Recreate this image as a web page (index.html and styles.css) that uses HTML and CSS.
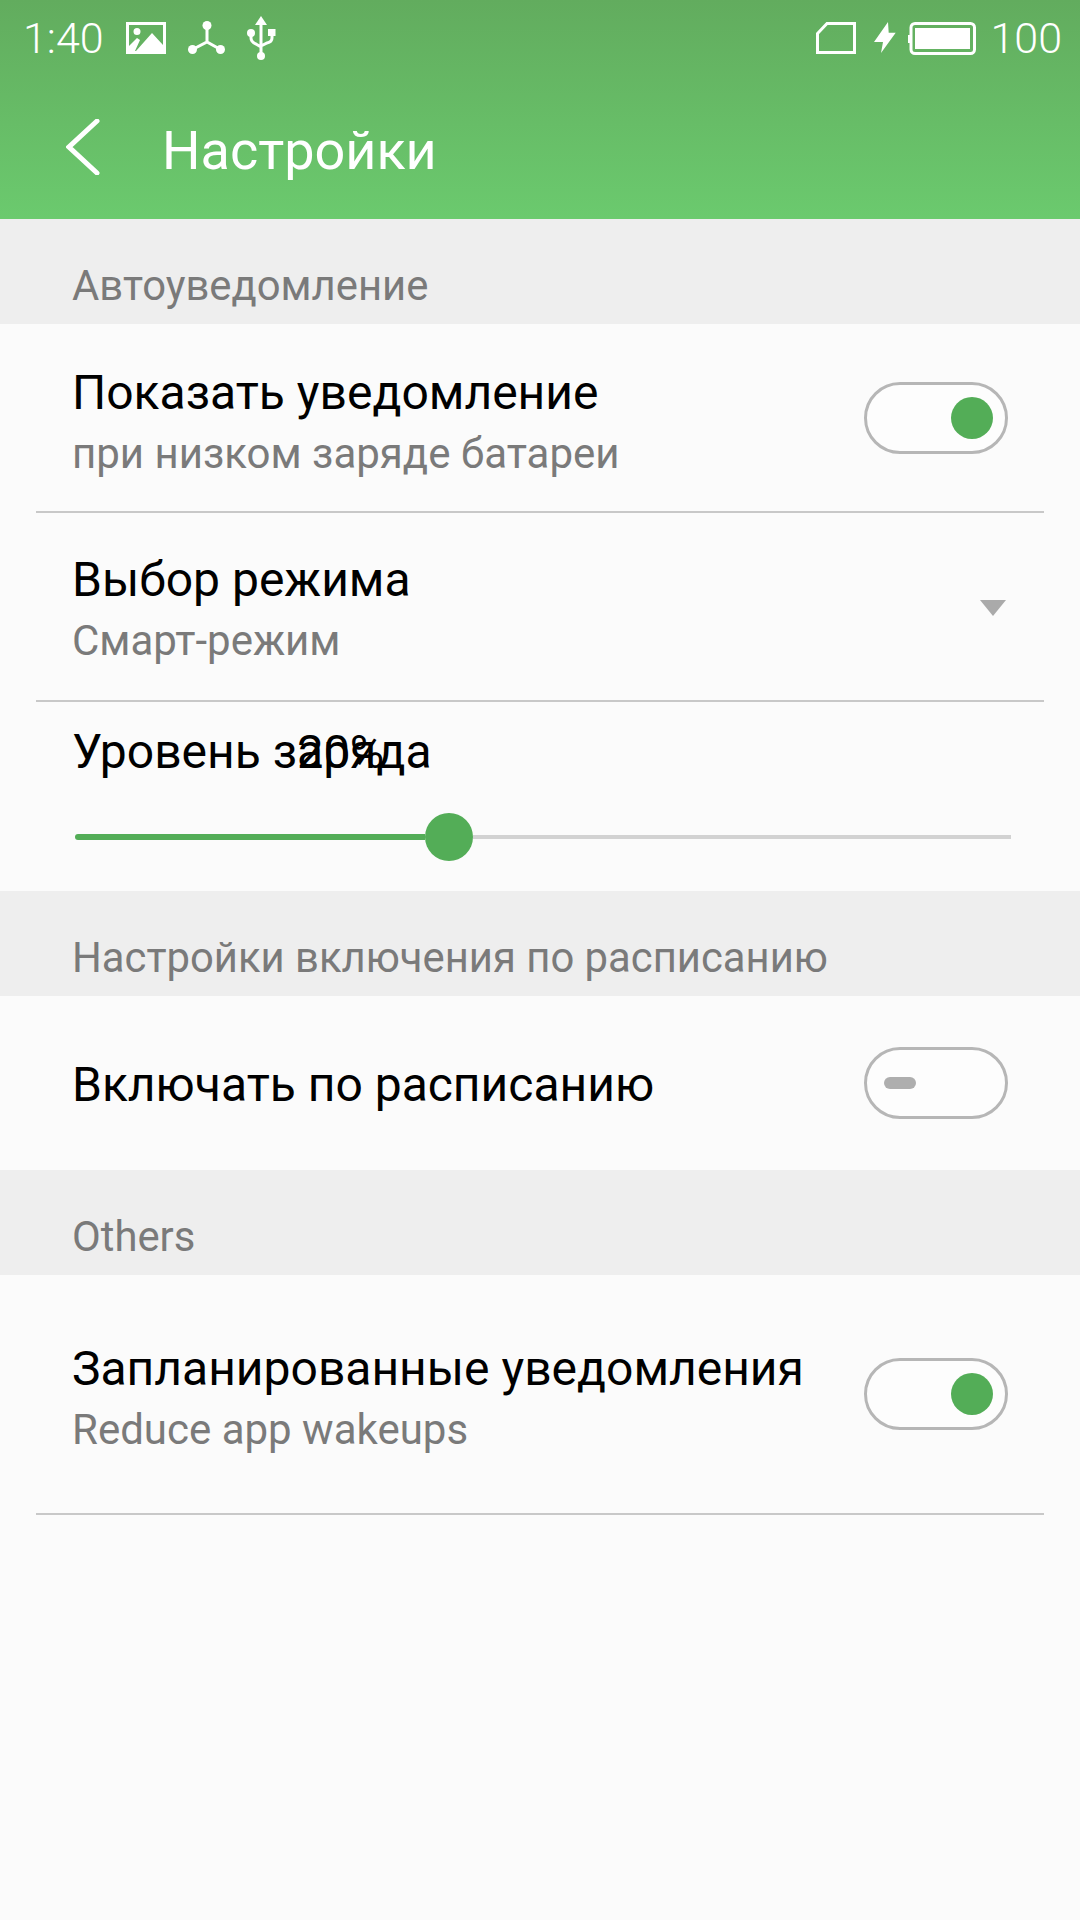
FILE: index.html
```html
<html>
<head>
<meta charset="utf-8" />
<link rel="stylesheet" href="styles.css">
</head>

<body>
    <div class="appbar">
        <div class="statusbar">
            <div class="status-group">
                <span class="status-text">1:40</span>
                <svg class="ic-image" width="40" height="32" viewBox="0 0 40 32">
                    <path fill="#fff" fill-rule="evenodd" d="M0 0H40V32H0ZM3 3V24L11 16 14 18 9 29H10L26 11 37 23V3ZM11 6a3.500 3.500 0 1 1 0 7 3.500 3.500 0 0 1 0-7Z"/>
                </svg>
                <svg class="ic-share" width="37" height="34" viewBox="0 0 37 34">
                    <g fill="#fff"><circle cx="19" cy="4.500" r="4.500"/><circle cx="4.500" cy="28.500" r="4.500"/><circle cx="32.500" cy="28.500" r="4.500"/></g>
                    <path fill="none" stroke="#fff" stroke-width="3" d="M19 4.500V21M4.500 28.500 19 21 32.500 28.500"/>
                </svg>
                <svg class="ic-usb" width="29" height="44" viewBox="0 0 29 44">
                    <g fill="#fff">
                        <path d="M14 0 20 9H8Z"/>
                        <circle cx="14" cy="40" r="4"/>
                        <circle cx="4" cy="17" r="4"/>
                        <rect x="21" y="13" width="7.500" height="7"/>
                    </g>
                    <path fill="none" stroke="#fff" stroke-width="3" d="M14 8V38M4 18V22Q4 26 9 28L14 31M25 19V22Q25 26 20 27L14 30"/>
                </svg>
            </div>
            <div class="status-group">
                <svg class="ic-sim" width="40" height="32" viewBox="0 0 40 32">
                    <path fill="none" stroke="#fff" stroke-width="3" d="M1.500 30.500V11.500L11 1.500H38.500V30.500Z"/>
                </svg>
                <svg class="ic-bolt" width="22" height="32" viewBox="0 0 22 32">
                    <path fill="#fff" d="M14 0 0 20H9L7 31 21.700 10.700H14.700Z"/>
                </svg>
                <svg class="ic-battery" width="68" height="33" viewBox="0 0 68 33">
                    <rect x="3" y="1.500" width="63.500" height="30" rx="4" fill="none" stroke="#fff" stroke-width="3"/>
                    <rect x="0" y="13" width="3" height="8" fill="#fff"/>
                    <rect x="7" y="6" width="55" height="21" fill="#fff"/>
                </svg>
                <span class="status-text">100</span>
            </div>
        </div>
        <div class="toolbar">
            <svg class="ic-back" width="34" height="56" viewBox="0 0 34 56">
                <path fill="none" stroke="#fff" stroke-width="5" stroke-linecap="round" d="M31 2 3 28 31 54"/>
            </svg>
            <span class="toolbar-title">Настройки</span>
        </div>
    </div>

    <div class="section-head">Автоуведомление</div>
    <div class="row row-line">
        <div class="row-text">
            <div class="row-title">Показать уведомление</div>
            <div class="row-sub">при низком заряде батареи</div>
        </div>
        <div class="toggle on"><span class="toggle-dot"></span></div>
    </div>
    <div class="row row-line">
        <div class="row-text row-text-mode">
            <div class="row-title">Выбор режима</div>
            <div class="row-sub">Смарт-режим</div>
        </div>
        <div class="dropdown-arrow"></div>
    </div>
    <div class="row-slider">
        <div class="slider-label">
            <span class="row-title">Уровень заряда</span>
            <span class="slider-value">20%</span>
        </div>
        <div class="slider">
            <div class="slider-fill"></div>
            <div class="slider-thumb"></div>
            <div class="slider-rest"></div>
        </div>
    </div>

    <div class="section-head">Настройки включения по расписанию</div>
    <div class="row row-single">
        <div class="row-title">Включать по расписанию</div>
        <div class="toggle"><span class="toggle-dash"></span></div>
    </div>

    <div class="section-head">Others</div>
    <div class="row row-tall row-line">
        <div class="row-text">
            <div class="row-title">Запланированные уведомления</div>
            <div class="row-sub">Reduce app wakeups</div>
        </div>
        <div class="toggle on"><span class="toggle-dot"></span></div>
    </div>
</body>
</html>
```

FILE: styles.css
```css
html, body {
    margin: 0px;
    height: 100%;
}
body {
    width: 1080px;
    height: 1920px;
    overflow: hidden;
    background: #fbfbfb;
    color: #000;
    font-family: Roboto, "Noto Sans", sans-serif;
}

/* green top area */
.appbar {
    height: 219px;
    background: linear-gradient(#62ac5e, #6bca6e);
    color: #fff;
}
.statusbar {
    height: 76px;
    padding: 0 18px 0 23px;
    display: flex;
    align-items: center;
    justify-content: space-between;
}
.status-group {
    display: flex;
    align-items: center;
}
.status-text {
    font-size: 43px;
    font-weight: 300;
}
.ic-image { margin-left: 22px; }
.ic-share { margin-left: 22px; }
.ic-usb { margin-left: 22px; }
.ic-bolt { margin-left: 18px; }
.ic-battery { margin-left: 12px; }
.ic-battery + .status-text { margin-left: 14px; }

.toolbar {
    height: 143px;
    padding-left: 66px;
    display: flex;
    align-items: center;
}
.ic-back { margin-bottom: 2px; }
.toolbar-title {
    margin-left: 62px;
    padding-top: 5px;
    font-size: 54px;
}

.section-head {
    height: 105px;
    box-sizing: border-box;
    padding: 39px 0 0 72px;
    background: #eee;
    color: #7a7a7a;
    font-size: 41.800px;
    line-height: 56px;
}

.row {
    position: relative;
    height: 189px;
    box-sizing: border-box;
    padding: 0 72px 0 72px;
    display: flex;
    align-items: center;
    justify-content: space-between;
}
.row-line::after {
    content: "";
    position: absolute;
    left: 36px;
    right: 36px;
    bottom: 0;
    height: 2px;
    background: #c8c8c8;
}
.row-single { height: 174px; }
.row-single .row-title { padding-top: 4px; }
.row-tall { height: 240px; }
.row-text { padding-top: 8px; }
.row-text-mode { padding-top: 4px; }
.row-title {
    font-size: 48px;
    line-height: 62px;
}
.row-sub {
    font-size: 42px;
    line-height: 60px;
    color: #7a7a7a;
}

.toggle {
    width: 144px;
    height: 72px;
    box-sizing: border-box;
    border: 3px solid #b6b6b6;
    border-radius: 36px;
    background: #fdfdfd;
    padding-left: 17px;
    margin-bottom: 2px;
    display: flex;
    align-items: center;
}
.row-single .toggle { margin-bottom: 0; }
.toggle.on {
    justify-content: flex-end;
    padding-left: 0;
    padding-right: 12px;
}
.toggle-dot {
    width: 42px;
    height: 42px;
    border-radius: 50%;
    background: #53ad57;
}
.toggle-dash {
    width: 32px;
    height: 12px;
    border-radius: 6px;
    background: #aeaeae;
}

.dropdown-arrow {
    margin-right: 2px;
    border-left: 13px solid transparent;
    border-right: 13px solid transparent;
    border-top: 16px solid #aaa;
}

.row-slider {
    height: 189px;
    box-sizing: border-box;
    padding: 19px 69px 0 75px;
}
.slider-label {
    position: relative;
    height: 62px;
    margin-left: -3px;
    font-size: 48px;
}
.slider-value {
    position: absolute;
    left: 225px;
    top: 0;
    font-size: 47px;
    line-height: 62px;
}
.slider {
    margin-top: 30px;
    height: 48px;
    display: flex;
    align-items: center;
}
.slider-fill {
    width: 350px;
    height: 6px;
    border-radius: 3px 0 0 3px;
    background: #53ad57;
}
.slider-thumb {
    width: 48px;
    height: 48px;
    border-radius: 50%;
    background: #53ad57;
    flex: none;
}
.slider-rest {
    flex: 1;
    height: 4px;
    background: #d2d2d2;
}
```
